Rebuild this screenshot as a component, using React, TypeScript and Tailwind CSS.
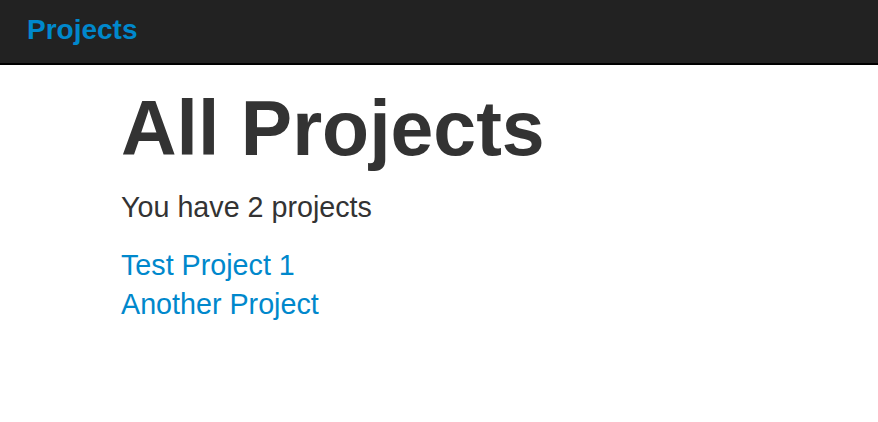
export default function App() {
  return (
    <div className="min-h-[422px] bg-white" style={{ fontFamily: '"Liberation Sans", Arial, sans-serif' }}>
      <div className="h-[65px] bg-[#222222] border-b-2 border-black box-border">
        <div className="pl-[27px] pt-[10px]">
          <a href="#" className="text-[28px] leading-[40px] font-bold text-[#0088cc]">Projects</a>
        </div>
      </div>
      <div className="pl-[121px] text-[#333333]">
        <h1 className="mt-[23px] text-[77px] leading-[80px] font-bold">All Projects</h1>
        <p className="mt-[19px] text-[28.7px] leading-[40px]">You have 2 projects</p>
        <ul className="mt-[19px] text-[28.7px] leading-[39px]">
          <li><a href="#" className="text-[#0088cc]">Test Project 1</a></li>
          <li><a href="#" className="text-[#0088cc]">Another Project</a></li>
        </ul>
      </div>
    </div>
  );
}
